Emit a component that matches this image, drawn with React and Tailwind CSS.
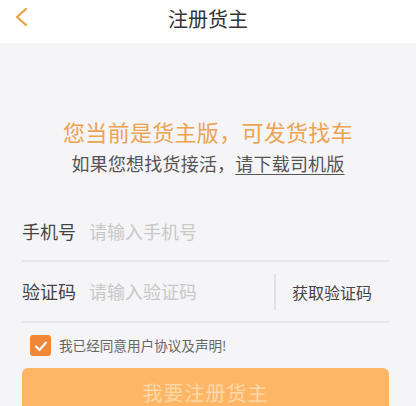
import React from "react";

const font = { fontFamily: '"Noto Sans CJK SC", "Noto Sans", sans-serif' };

export default function App() {
  return (
    <div className="w-[416px] h-[406px] overflow-hidden bg-[#f5f4f6]" style={font}>
      <div className="relative h-[43px] bg-white flex items-center justify-center">
        <svg className="absolute left-[13px] top-[7px]" width="18" height="20" viewBox="0 0 18 20">
          <path d="M13 2 L4 10 L13 18" fill="none" stroke="#e8a040" strokeWidth="2.2" strokeLinecap="round" strokeLinejoin="round" />
        </svg>
        <span className="text-[20px] leading-none text-[#333] -mt-[6px]">注册货主</span>
      </div>
      <div className="flex flex-col items-center pt-[73px]">
        <div className="text-[22px] leading-[30px] text-[#eca352] tracking-[0.3px]">您当前是货主版，可发货找车</div>
        <div className="text-[18px] leading-[26px] text-[#555] mt-[4px] tracking-[0.2px]">
          如果您想找货接活，<span className="underline underline-offset-[3px] decoration-1">请下载司机版</span>
        </div>
      </div>
      <div className="pl-[22px] pr-[27px] mt-[26px]">
        <div className="flex items-center h-[60px] border-b-2 border-[#e6e5e8]">
          <span className="text-[18px] text-[#444] w-[67px]">手机号</span>
          <span className="text-[18px] text-[#c8c8c8]">请输入手机号</span>
        </div>
        <div className="flex items-center h-[61px] border-b-2 border-[#e6e5e8]">
          <span className="text-[18px] text-[#444] w-[67px]">验证码</span>
          <span className="text-[18px] text-[#c8c8c8] flex-1">请输入验证码</span>
          <div className="w-[2px] h-[36px] bg-[#e2e1e4]" />
          <span className="text-[16px] text-[#444] w-[113px] pl-[16px]">获取验证码</span>
        </div>
        <div className="flex items-center h-[45px] pl-[8px]">
          <div className="w-[21px] h-[21px] rounded-[3px] bg-[#f0883a] flex items-center justify-center">
            <svg width="14" height="12" viewBox="0 0 14 12">
              <path d="M2 6.5 L5.5 10 L12 2.5" fill="none" stroke="white" strokeWidth="2" strokeLinecap="round" strokeLinejoin="round" />
            </svg>
          </div>
          <span className="ml-[8px] text-[13.6px] text-[#666]">我已经同意用户协议及声明!</span>
        </div>
        <div className="h-[50px] rounded-[6px] bg-[#fdb665] flex items-center justify-center">
          <span className="text-[20px] text-[#fdd8a8] tracking-[1px]">我要注册货主</span>
        </div>
      </div>
    </div>
  );
}
